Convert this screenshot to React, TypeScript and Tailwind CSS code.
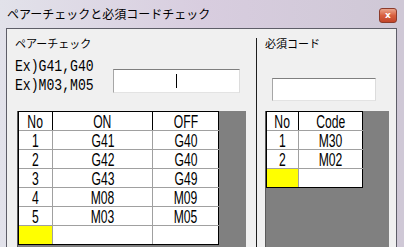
const jp = "font-['Noto_Sans_CJK_JP','Liberation_Sans',sans-serif]";
const grid = "font-['Liberation_Sans',sans-serif] text-[19px] leading-none inline-block scale-x-[0.64] scale-y-[0.95] mt-[1px]";

const pairs = [
  ["1", "G41", "G40"],
  ["2", "G42", "G40"],
  ["3", "G43", "G49"],
  ["4", "M08", "M09"],
  ["5", "M03", "M05"],
];

const codes = [
  ["1", "M30"],
  ["2", "M02"],
];

const Cell = ({ w, head, last, yellow, children }: { w: string; head?: boolean; last?: boolean; yellow?: boolean; children?: React.ReactNode }) => (
  <div
    className={`${w} h-full flex items-center justify-center border-r ${head || last ? "border-r-black" : "border-r-[#a0a0a0]"} ${yellow ? "bg-[#ffff00]" : "bg-white"}`}
  >
    {children && <span className={grid}>{children}</span>}
  </div>
);

const Row = ({ last, children }: { last?: boolean; children: React.ReactNode }) => (
  <div className={`flex h-[19px] border-b ${last ? "border-b-black" : "border-b-[#a0a0a0]"}`}>{children}</div>
);

const App = () => {
  return (
    <div className="w-[404px] h-[247px] overflow-hidden flex flex-col bg-linear-to-r from-[#e2e2ea] via-[#d8cddf] to-[#cfc8d6]">
      {/* Title bar */}
      <div className="h-[28px] shrink-0 flex items-center justify-between pl-[7px] pr-[7px]">
        <span className={`${jp} text-[12px] text-black leading-none`}>ペアーチェックと必須コードチェック</span>
        <div className="w-[18px] h-[15px] mt-[3px] rounded-[3px] border border-[#8c3b2b] bg-linear-to-b from-[#e9a48c] via-[#d8603f] to-[#c2452a] flex items-center justify-center">
          <span className="font-['DejaVu_Sans',sans-serif] text-[9px] font-bold text-white leading-none">x</span>
        </div>
      </div>

      {/* Client area */}
      <div className="flex-1 ml-[6px] mr-[7px] border-l border-t border-r border-[#5e5e68] bg-[#f0f0f0] flex">
        {/* Left panel */}
        <div className="w-[249px] shrink-0 flex flex-col pl-[8px] pt-[7px]">
          <div className={`${jp} text-[11px] leading-[14px] text-black`}>ペアーチェック</div>
          <div className="flex items-start mt-[8px]">
            <div className="w-[98px] font-['Liberation_Mono',monospace] text-[16px] leading-[19px] text-black">
              <div className="scale-x-[0.82] origin-left whitespace-nowrap">Ex)G41,G40</div>
              <div className="scale-x-[0.82] origin-left whitespace-nowrap">Ex)M03,M05</div>
            </div>
            <div className="w-[127px] h-[24px] mt-[11px] bg-white border border-t-[#7f7f7f] border-l-[#a6a6a6] border-r-[#dcdcdc] border-b-[#e3e3e3] flex items-center pl-[62px]">
              <div className="w-px h-[14px] bg-black" />
            </div>
          </div>
          <div className="mt-[15px] ml-[2px] w-[229px] h-[200px] bg-[#808080] border-l border-[#5a5a5a]">
            <div className="w-[201px] border-l border-t border-black">
              <Row>
                <Cell w="w-[34px]" head>No</Cell>
                <Cell w="w-[100px]" head>ON</Cell>
                <Cell w="w-[66px]" head>OFF</Cell>
              </Row>
              {pairs.map((p) => (
                <Row key={p[0]}>
                  <Cell w="w-[34px]">{p[0]}</Cell>
                  <Cell w="w-[100px]">{p[1]}</Cell>
                  <Cell w="w-[66px]" last>{p[2]}</Cell>
                </Row>
              ))}
              <Row last>
                <Cell w="w-[34px]" yellow />
                <Cell w="w-[100px]" />
                <Cell w="w-[66px]" last />
              </Row>
            </div>
          </div>
        </div>

        {/* Separator */}
        <div className="w-px mt-[9px] bg-[#1e1e1e] shrink-0" />

        {/* Right panel */}
        <div className="flex-1 flex flex-col pl-[8px] pt-[7px]">
          <div className={`${jp} text-[11px] leading-[14px] text-black`}>必須コード</div>
          <div className="ml-[7px] mt-[28px] w-[104px] h-[23px] bg-white border border-t-[#7f7f7f] border-l-[#a6a6a6] border-r-[#dcdcdc] border-b-[#e3e3e3]" />
          <div className="mt-[10px] w-[124px] h-[200px] bg-[#808080] border-l border-[#5a5a5a]">
            <div className="w-[97px] border-l border-t border-black">
              <Row>
                <Cell w="w-[32px]" head>No</Cell>
                <Cell w="w-[64px]" head>Code</Cell>
              </Row>
              {codes.map((c) => (
                <Row key={c[0]}>
                  <Cell w="w-[32px]">{c[0]}</Cell>
                  <Cell w="w-[64px]" last>{c[1]}</Cell>
                </Row>
              ))}
              <Row last>
                <Cell w="w-[32px]" yellow />
                <Cell w="w-[64px]" last />
              </Row>
            </div>
          </div>
        </div>
      </div>
    </div>
  );
};

export default App;
